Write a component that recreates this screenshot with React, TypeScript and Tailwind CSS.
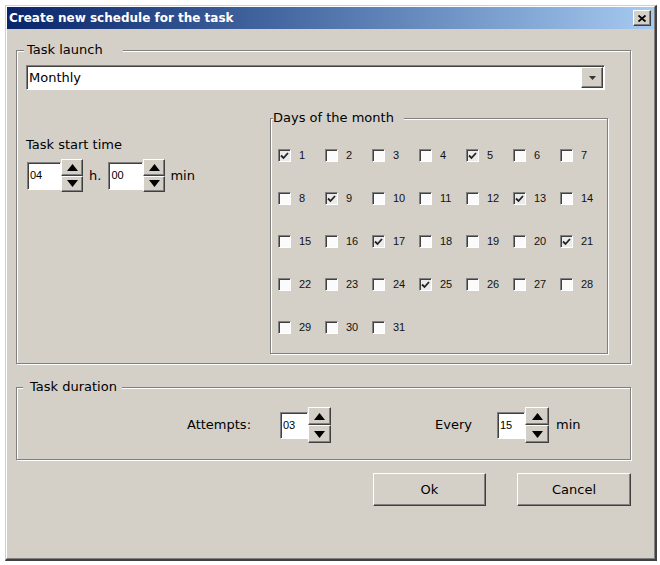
import React from 'react';

const checkedDays = [1, 5, 9, 13, 17, 21, 25];
const days = Array.from({ length: 31 }, (_, i) => i + 1);

const raised =
  'bg-[#d4d0c8] border border-t-white border-l-white border-r-[#404040] border-b-[#404040] shadow-[inset_-1px_-1px_0_#808080]';
const sunken =
  'border border-t-[#808080] border-l-[#808080] border-r-white border-b-white shadow-[inset_1px_1px_0_#404040]';
const etched = 'border border-[#808080] shadow-[inset_1px_1px_0_#fff,1px_1px_0_#fff]';

function SpinButton({ up }: { up: boolean }) {
  return (
    <div className={`flex-1 flex items-center justify-center ${raised}`}>
      <svg width="11" height="7" viewBox="0 0 11 7">
        {up ? (
          <path d="M5.5 0 L11 7 L0 7 Z" fill="#000" />
        ) : (
          <path d="M0 0 L11 0 L5.5 7 Z" fill="#000" />
        )}
      </svg>
    </div>
  );
}

function Spinner({ className }: { className: string }) {
  return (
    <div className={`flex flex-col ${className}`}>
      <SpinButton up />
      <SpinButton up={false} />
    </div>
  );
}

function NumField({ value, className }: { value: string; className: string }) {
  return (
    <div
      className={`bg-white flex items-center pl-[2px] text-[11px] font-['Liberation_Sans',sans-serif] ${sunken} ${className}`}
    >
      {value}
    </div>
  );
}

function DayBox({ day }: { day: number }) {
  const checked = checkedDays.includes(day);
  return (
    <div className="h-[43px] flex items-center gap-[8px]">
      <div
        className={`w-[13px] h-[13px] flex items-center justify-center ${sunken} ${
          checked ? 'bg-[#ebebeb]' : 'bg-[#fbfbfb]'
        }`}
      >
        {checked && (
          <svg width="9" height="8" viewBox="0 0 9 8">
            <path d="M1 3.5 L3.5 6 L8 1" stroke="#222" strokeWidth="1.8" fill="none" />
          </svg>
        )}
      </div>
      <span className="text-[11px] font-['Liberation_Sans',sans-serif] text-[#111]">{day}</span>
    </div>
  );
}

export default function App() {
  return (
    <div className="w-[660px] h-[565px] bg-white pl-[5px] pt-[5px] font-['DejaVu_Sans',sans-serif] text-[13px] text-black">
      <div className="w-[652px] h-[556px] bg-[#d4d0c8] border border-t-[#d4d0c8] border-l-[#d4d0c8] border-r-2 border-r-[#404040] border-b-2 border-b-[#404040]">
        <div className="h-full border border-t-white border-l-white border-r-[#808080] border-b-[#808080] flex flex-col">
          {/* title bar */}
          <div className="h-[22px] flex items-center justify-between bg-linear-to-r from-[#0a246a] to-[#a6caf0] pl-[2px] pr-[3px]">
            <span className="text-white font-bold text-[12px] leading-none">
              Create new schedule for the task
            </span>
            <div className={`w-[18px] h-[16px] flex items-center justify-center ${raised}`}>
              <svg width="8" height="7" viewBox="0 0 8 7">
                <path d="M0.5 0.5 L7.5 6.5 M7.5 0.5 L0.5 6.5" stroke="#000" strokeWidth="1.8" />
              </svg>
            </div>
          </div>

          <div className="pl-[9px] pt-[13px] flex flex-col">
            {/* Task launch */}
            <fieldset className={`w-[615px] ${etched}`}>
              <legend className="ml-[7px] pl-[3px] pr-[20px] leading-[16px] bg-[#d4d0c8]">
                Task launch
              </legend>
              <div className="pl-[9px] pt-[7px] pb-[9px]">
                <div
                  className={`w-[579px] h-[25px] bg-white flex items-center justify-between pl-[2px] pr-[1px] ${sunken}`}
                >
                  <span>Monthly</span>
                  <div className={`w-[22px] h-[21px] flex items-center justify-center ${raised}`}>
                    <svg width="7" height="4" viewBox="0 0 7 4">
                      <path d="M0 0 L7 0 L3.5 4 Z" fill="#333" />
                    </svg>
                  </div>
                </div>

                <div className="flex mt-[20px]">
                  <div className="w-[244px] pt-[27px]">
                    <div className="leading-[16px]">Task start time</div>
                    <div className="flex items-center mt-[6px] ml-[1px]">
                      <NumField value="04" className="w-[34px] h-[28px]" />
                      <Spinner className="w-[22px] h-[33px]" />
                      <span className="ml-[6px]">h.</span>
                      <NumField value="00" className="ml-[7px] w-[35px] h-[28px]" />
                      <Spinner className="w-[22px] h-[33px]" />
                      <span className="ml-[5px]">min</span>
                    </div>
                  </div>

                  <fieldset className={`w-[338px] ${etched}`}>
                    <legend className="ml-[2px] pr-[10px] leading-[16px] bg-[#d4d0c8]">
                      Days of the month
                    </legend>
                    <div className="grid grid-cols-[repeat(7,47px)] pl-[7px] pt-[8px] pb-[4px]">
                      {days.map((d) => (
                        <DayBox key={d} day={d} />
                      ))}
                    </div>
                  </fieldset>
                </div>
              </div>
            </fieldset>

            {/* Task duration */}
            <fieldset className={`w-[615px] mt-[15px] ${etched}`}>
              <legend className="ml-[6px] pl-[7px] pr-[5px] leading-[16px] bg-[#d4d0c8]">
                Task duration
              </legend>
              <div className="flex items-center pl-[170px] pt-[12px] pb-[16px]">
                <span className="w-[70px]">Attempts:</span>
                <NumField value="03" className="ml-[23px] w-[28px] h-[27px]" />
                <Spinner className="w-[23px] h-[36px]" />
                <span className="ml-[104px] w-[37px]">Every</span>
                <NumField value="15" className="ml-[25px] w-[28px] h-[27px]" />
                <Spinner className="w-[24px] h-[36px]" />
                <span className="ml-[7px]">min</span>
              </div>
            </fieldset>

            <div className="w-[615px] flex justify-end gap-[31px] mt-[13px]">
              <button className={`w-[113px] h-[33px] text-[13px] ${raised}`}>Ok</button>
              <button className={`w-[114px] h-[33px] text-[13px] ${raised}`}>Cancel</button>
            </div>
          </div>
        </div>
      </div>
    </div>
  );
}
